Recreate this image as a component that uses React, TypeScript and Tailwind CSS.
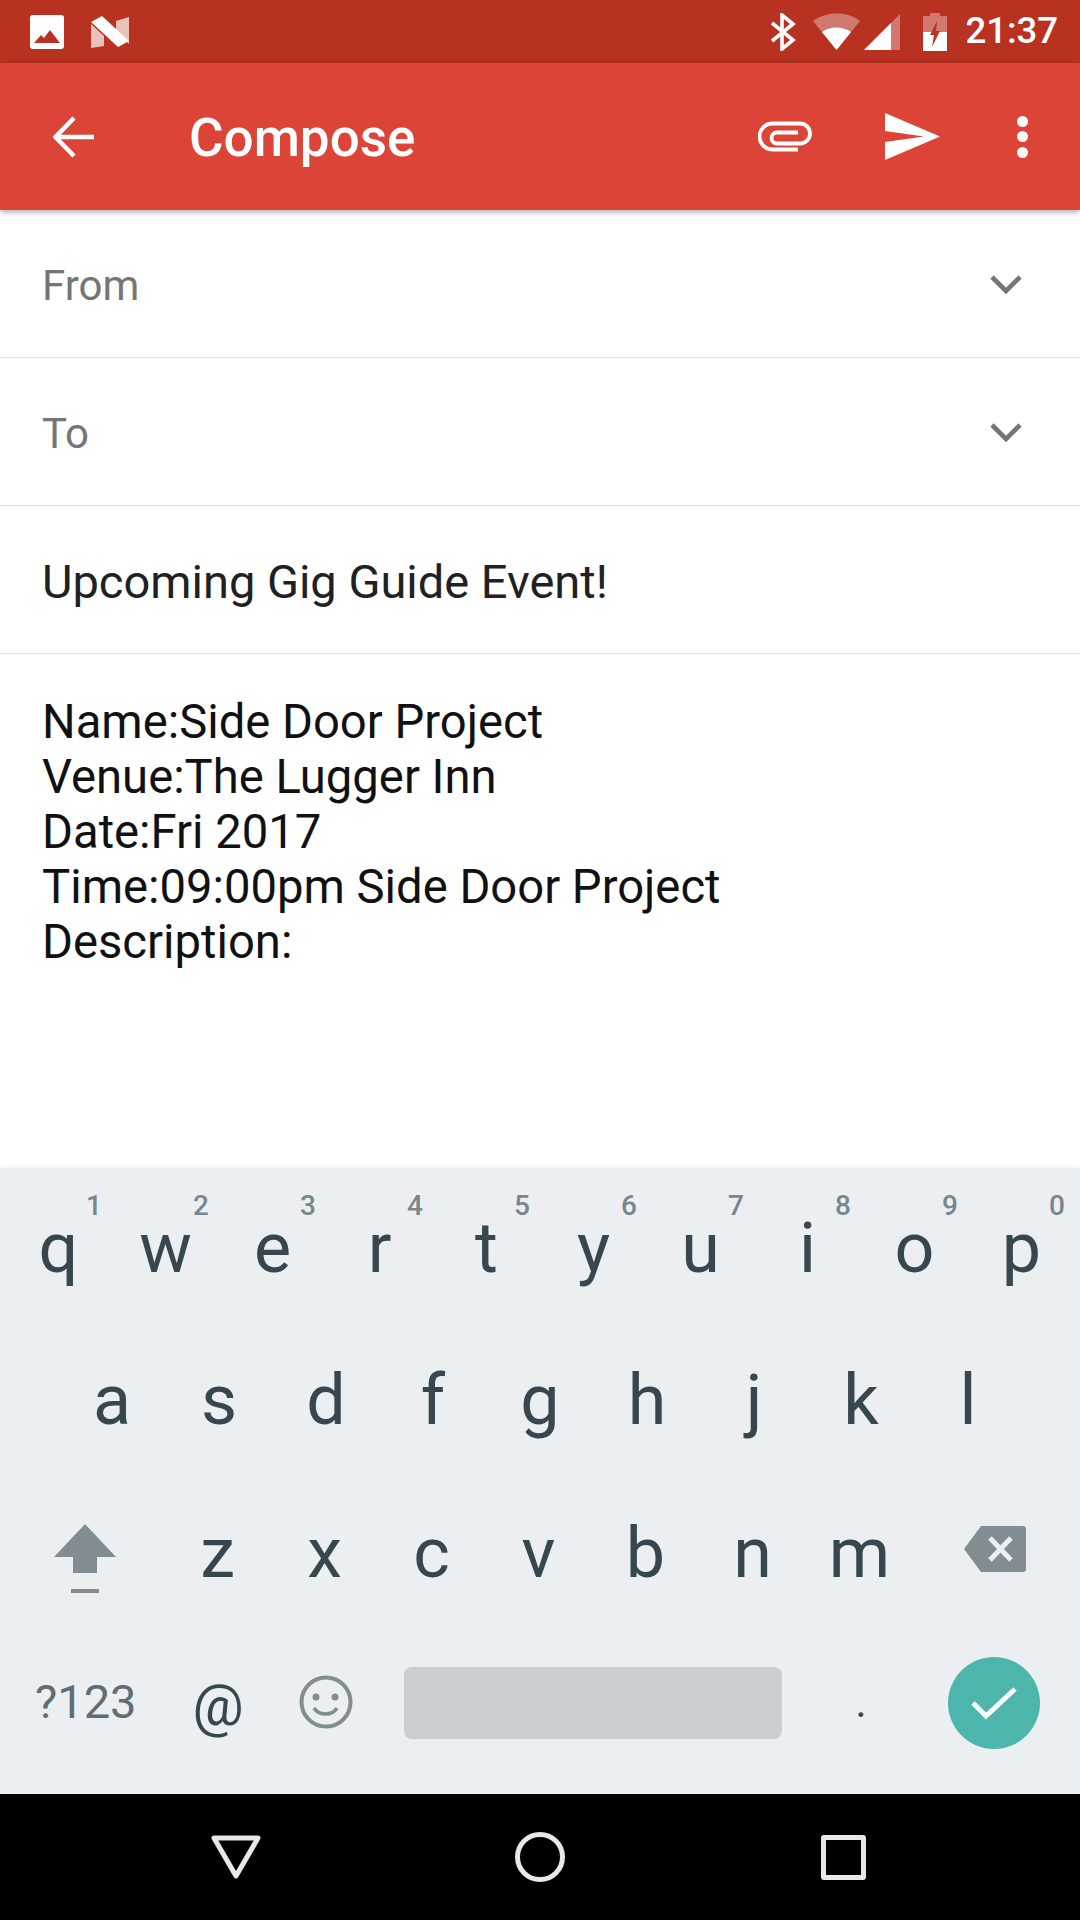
const roboto = { fontFamily: 'Roboto, sans-serif' }

function StatusBar() {
  return (
    <div className="h-[63px] bg-[#b93221] flex items-center shrink-0 pl-[30px] pr-[22px]">
      <svg width="34" height="34" viewBox="0 0 34 34">
        <rect x="0" y="0" width="34" height="34" rx="3" fill="#fff" />
        <path d="M4 28 L11 20 L14 23 L20 15 L30 28 Z" fill="#b93221" />
      </svg>
      <svg width="38" height="32" viewBox="0 0 38 32" className="ml-[27px]">
        <path d="M0 8 L13 20 V30 L0 32 Z" fill="#fff" fillOpacity="0.7" />
        <path d="M25 16 L38 28 V1 L25 5 Z" fill="#fff" fillOpacity="0.7" />
        <path d="M0 6 L11 0 L38 25 L27 31 Z" fill="#fff" />
      </svg>
      <div className="flex-1" />
      <svg width="26" height="38" viewBox="0 0 26 38" fill="none" stroke="#fff" strokeWidth="3.6">
        <path d="M2 10 L23 27 L12 36 V2 L23 11 L2 28" />
      </svg>
      <svg width="48" height="38" viewBox="0 0 48 38" className="ml-[17px]">
        <path d="M0 8 C13 -2 35 -2 47 8 L23.5 37 Z" fill="#fff" fillOpacity="0.35" />
        <path d="M9 19 C17 13 30 13 38 19 L23.5 37 Z" fill="#fff" />
      </svg>
      <svg width="37" height="36" viewBox="0 0 37 36" className="ml-[3px]">
        <path d="M0 36 L36 0 V36 Z" fill="#fff" fillOpacity="0.35" />
        <path d="M0 36 L27 9 V36 Z" fill="#fff" />
      </svg>
      <svg width="24" height="38" viewBox="0 0 24 38" className="ml-[22px]">
        <path d="M7 0 H17 V3 H24 V19 H0 V3 H7 Z" fill="#fff" fillOpacity="0.35" />
        <path d="M0 19 H24 V38 H0 Z" fill="#fff" />
        <path d="M14 8 L7 22 H11 L9 34 L17 18 H13 Z" fill="#b93221" />
      </svg>
      <span className="ml-[18px] text-[36.5px] leading-none font-medium text-white" style={roboto}>21:37</span>
    </div>
  )
}

function Toolbar() {
  return (
    <div className="h-[147px] bg-[#db4437] flex items-center shrink-0 shadow-[0_2px_6px_rgba(0,0,0,0.35)] relative z-10">
      <svg width="42" height="42" viewBox="0 0 42 42" fill="none" stroke="#fff" strokeWidth="4.5" className="ml-[53px]">
        <path d="M41 21 H3 M21 2 L2.5 21 L21 40" />
      </svg>
      <span className="ml-[94px] mt-[3px] text-[53px] font-medium text-white leading-none" style={roboto}>Compose</span>
      <div className="flex-1" />
      <svg width="54" height="31" viewBox="0 0 54 31" fill="none" stroke="#fff" strokeWidth="3.8" className="mr-[73px]">
        <path d="M40 28.5 H14.5 A13 13 0 0 1 14.5 2.5 H42 A10 10 0 0 1 42 22.5 H19 A5.5 5.5 0 0 1 19 11.5 H40" />
      </svg>
      <svg width="56" height="48" viewBox="0 0 56 48" className="mr-[76px]">
        <path d="M0 0 L55 23.5 L0 47 V29 L39 23.5 L0 18 Z" fill="#fff" />
      </svg>
      <div className="flex flex-col gap-[4.5px] mr-[52px]">
        <div className="w-[11px] h-[11px] rounded-full bg-white" />
        <div className="w-[11px] h-[11px] rounded-full bg-white" />
        <div className="w-[11px] h-[11px] rounded-full bg-white" />
      </div>
    </div>
  )
}

function Chevron() {
  return (
    <svg width="32" height="20" viewBox="0 0 32 20" fill="none" stroke="#757575" strokeWidth="4.6">
      <path d="M2 3 L16 17 L30 3" />
    </svg>
  )
}

function Field({ label, color, size, chevron }: { label: string; color: string; size: string; chevron?: boolean }) {
  return (
    <div className="h-[148px] border-b border-[#e0e0e0] flex items-center justify-between pl-[42px] pr-[58px] shrink-0">
      <span className={`${size} leading-none`} style={{ ...roboto, color }}>{label}</span>
      {chevron && <Chevron />}
    </div>
  )
}

const rowOne = ['q', 'w', 'e', 'r', 't', 'y', 'u', 'i', 'o', 'p']
const hints = ['1', '2', '3', '4', '5', '6', '7', '8', '9', '0']
const rowTwo = ['a', 's', 'd', 'f', 'g', 'h', 'j', 'k', 'l']
const rowThree = ['z', 'x', 'c', 'v', 'b', 'n', 'm']

function Key({ ch, hint }: { ch: string; hint?: string }) {
  return (
    <div className="w-[107px] h-full flex items-center justify-center relative text-[70px] leading-none text-[#37474f]" style={roboto}>
      {ch}
      {hint && (
        <span className="absolute top-[20px] right-[10px] text-[28px] font-medium text-[#78868d]">{hint}</span>
      )}
    </div>
  )
}

function Keyboard() {
  return (
    <div className="flex-1 bg-[#eceff1] flex flex-col shadow-[0_-1px_4px_rgba(0,0,0,0.06)]">
      <div className="h-[153px] pt-[2px] flex justify-center items-stretch mt-[2px]">
        {rowOne.map((k, i) => <Key key={k} ch={k} hint={hints[i]} />)}
      </div>
      <div className="h-[153px] flex justify-center">
        {rowTwo.map((k) => <Key key={k} ch={k} />)}
      </div>
      <div className="h-[153px] flex justify-start">
        <div className="w-[164px] h-full pl-[5px] pt-[13px] flex items-center justify-center">
          <svg width="64" height="70" viewBox="0 0 64 70">
            <path d="M32 0 L63 33 H44 V49 H20 V33 H1 Z" fill="#818d92" />
            <rect x="18" y="65" width="28" height="4" fill="#818d92" />
          </svg>
        </div>
        {rowThree.map((k) => <Key key={k} ch={k} />)}
        <div className="w-[161px] h-full pb-[7px] pl-[2px] flex items-center justify-center">
          <svg width="64" height="48" viewBox="0 0 64 48">
            <path d="M18 1 H60 A3 3 0 0 1 63 4 V44 A3 3 0 0 1 60 47 H18 L1 24 Z" fill="#818d92" />
            <path d="M27 13 L48 35 M48 13 L27 35" stroke="#eceff1" strokeWidth="5" fill="none" />
          </svg>
        </div>
      </div>
      <div className="flex-1 flex items-center pl-[35px] pb-[17px]">
        <span className="w-[120px] -mt-[3px] text-[47px] leading-none text-[#5f6e75]" style={roboto}>?123</span>
        <span className="w-[126px] mt-[5px] text-center text-[57px] leading-none text-[#37474f]" style={roboto}>@</span>
        <svg width="54" height="54" viewBox="0 0 54 54" fill="none" stroke="#818d92" className="ml-[18px] -mt-[2px]">
          <circle cx="27" cy="27" r="24.5" strokeWidth="4" />
          <circle cx="17" cy="22" r="3.5" fill="#818d92" stroke="none" />
          <circle cx="36" cy="22" r="3.5" fill="#818d92" stroke="none" />
          <path d="M15 33 C20 41 33 41 38 33" strokeWidth="3.5" />
        </svg>
        <div className="ml-[51px] w-[378px] h-[72px] bg-[#c9ced1] rounded-[8px]" />
        <span className="w-[158px] text-center text-[42px] leading-none text-[#37474f]" style={roboto}>.</span>
        <div className="ml-[8px] w-[92px] h-[92px] rounded-full bg-[#4db6ac] flex items-center justify-center">
          <svg width="48" height="36" viewBox="0 0 48 36" fill="none" stroke="#fff" strokeWidth="5">
            <path d="M3 18 L16 31 L45 4" />
          </svg>
        </div>
      </div>
    </div>
  )
}

function NavBar() {
  return (
    <div className="h-[126px] bg-black flex items-center shrink-0">
      <svg width="50" height="44" viewBox="0 0 50 44" fill="none" stroke="#e8e8e8" strokeWidth="5" strokeLinejoin="round" className="ml-[211px]">
        <path d="M3 3 H47 L25 41 Z" />
      </svg>
      <svg width="50" height="50" viewBox="0 0 50 50" fill="none" stroke="#e8e8e8" strokeWidth="5" className="ml-[254px]">
        <circle cx="25" cy="25" r="22.5" />
      </svg>
      <div className="ml-[256px] w-[45px] h-[45px] border-[5px] border-[#e8e8e8] rounded-[3px]" />
    </div>
  )
}

export default function App() {
  return (
    <div className="w-[1080px] h-[1920px] flex flex-col bg-white overflow-hidden" style={roboto}>
      <StatusBar />
      <Toolbar />
      <Field label="From" color="#757575" size="text-[42px] mt-[5px]" chevron />
      <Field label="To" color="#757575" size="text-[42px] mt-[5px]" chevron />
      <Field label="Upcoming Gig Guide Event!" color="#212121" size="text-[47px] mt-[3px]" />
      <div className="h-[514px] shrink-0 pl-[42px] pt-[41px] text-[47.2px] leading-[55px] text-[#111]">
        <div>Name:Side Door Project</div>
        <div>Venue:The Lugger Inn</div>
        <div>Date:Fri 2017</div>
        <div>Time:09:00pm Side Door Project</div>
        <div>Description:</div>
      </div>
      <Keyboard />
      <NavBar />
    </div>
  )
}
